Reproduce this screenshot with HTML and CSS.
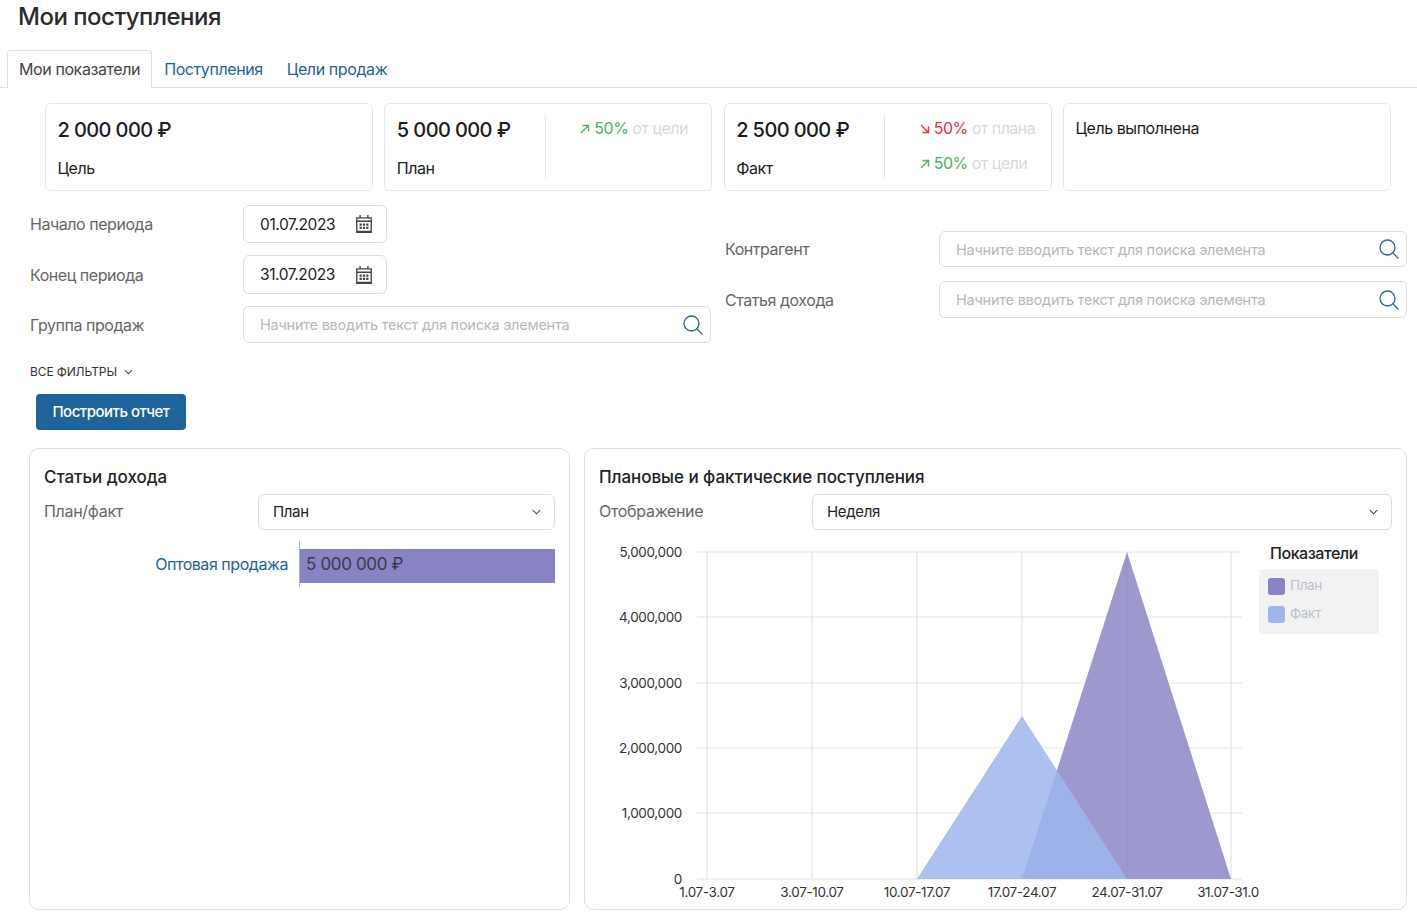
FILE: index.html
```html
<!DOCTYPE html>
<html lang="ru">
<head>
    <meta charset="UTF-8">
    <title>Мои поступления</title>
    <link rel="stylesheet" href="styles.css">
</head>
<body>
    <h1 class="page-title">Мои поступления</h1>

    <div class="tabs">
        <a class="tab active">Мои показатели</a>
        <a class="tab">Поступления</a>
        <a class="tab">Цели продаж</a>
    </div>

    <div class="cards">
        <div class="card">
            <div class="card-main">
                <div class="amount">2 000 000 ₽</div>
                <div class="card-label">Цель</div>
            </div>
        </div>
        <div class="card">
            <div class="card-main split">
                <div class="amount">5 000 000 ₽</div>
                <div class="card-label">План</div>
            </div>
            <div class="card-stats">
                <div class="stat up">
                    <svg class="arrow" viewBox="0 0 10 10"><path d="M1 9 L8.5 1.5 M2.5 1.5 H8.5 V7.5"/></svg>
                    <span class="pct">50%</span> <span class="muted">от цели</span>
                </div>
            </div>
        </div>
        <div class="card">
            <div class="card-main split">
                <div class="amount">2 500 000 ₽</div>
                <div class="card-label">Факт</div>
            </div>
            <div class="card-stats">
                <div class="stat down">
                    <svg class="arrow" viewBox="0 0 10 10"><path d="M1 1 L8.5 8.5 M2.5 8.5 H8.5 V2.5"/></svg>
                    <span class="pct">50%</span> <span class="muted">от плана</span>
                </div>
                <div class="stat up">
                    <svg class="arrow" viewBox="0 0 10 10"><path d="M1 9 L8.5 1.5 M2.5 1.5 H8.5 V7.5"/></svg>
                    <span class="pct">50%</span> <span class="muted">от цели</span>
                </div>
            </div>
        </div>
        <div class="card">
            <div class="card-note">Цель выполнена</div>
        </div>
    </div>

    <div class="filters">
        <div class="filter-col">
            <div class="filter-row">
                <span class="filter-label">Начало периода</span>
                <div class="field date">
                    <span>01.07.2023</span>
                    <svg class="cal" viewBox="0 0 16 18"><path d="M1.5 3.5 H14.5 V16.5 H1.5 Z M1.5 6.5 H14.5 M4.5 1 V4 M11.5 1 V4"/><path class="cal-dots" d="M4 8.5 h2 v2 h-2 z M7 8.5 h2 v2 h-2 z M10 8.5 h2 v2 h-2 z M4 11.5 h2 v2 h-2 z M7 11.5 h2 v2 h-2 z M10 11.5 h2 v2 h-2 z M1.5 15 h13 v1.5 h-13 z"/></svg>
                </div>
            </div>
            <div class="filter-row">
                <span class="filter-label">Конец периода</span>
                <div class="field date tall">
                    <span>31.07.2023</span>
                    <svg class="cal" viewBox="0 0 16 18"><path d="M1.5 3.5 H14.5 V16.5 H1.5 Z M1.5 6.5 H14.5 M4.5 1 V4 M11.5 1 V4"/><path class="cal-dots" d="M4 8.5 h2 v2 h-2 z M7 8.5 h2 v2 h-2 z M10 8.5 h2 v2 h-2 z M4 11.5 h2 v2 h-2 z M7 11.5 h2 v2 h-2 z M10 11.5 h2 v2 h-2 z M1.5 15 h13 v1.5 h-13 z"/></svg>
                </div>
            </div>
            <div class="filter-row">
                <span class="filter-label">Группа продаж</span>
                <div class="field search">
                    <span class="placeholder">Начните вводить текст для поиска элемента</span>
                    <svg class="loupe" viewBox="0 0 22 20"><circle cx="9.5" cy="8.5" r="7.5"/><path d="M15 14 L20.5 19.5"/></svg>
                </div>
            </div>
        </div>
        <div class="filter-col right">
            <div class="filter-row">
                <span class="filter-label">Контрагент</span>
                <div class="field search short">
                    <span class="placeholder">Начните вводить текст для поиска элемента</span>
                    <svg class="loupe" viewBox="0 0 22 20"><circle cx="9.5" cy="8.5" r="7.5"/><path d="M15 14 L20.5 19.5"/></svg>
                </div>
            </div>
            <div class="filter-row">
                <span class="filter-label">Статья дохода</span>
                <div class="field search">
                    <span class="placeholder">Начните вводить текст для поиска элемента</span>
                    <svg class="loupe" viewBox="0 0 22 20"><circle cx="9.5" cy="8.5" r="7.5"/><path d="M15 14 L20.5 19.5"/></svg>
                </div>
            </div>
        </div>
    </div>

    <div class="all-filters">ВСЕ ФИЛЬТРЫ
        <svg class="chev small" viewBox="0 0 10 6"><path d="M1 1 L5 5 L9 1"/></svg>
    </div>
    <button class="btn-primary">Построить отчет</button>

    <div class="panels">
        <section class="panel">
            <h2 class="panel-title">Статьи дохода</h2>
            <div class="panel-row">
                <span class="filter-label">План/факт</span>
                <div class="field select">
                    <span>План</span>
                    <svg class="chev" viewBox="0 0 10 6"><path d="M1 1 L5 5 L9 1"/></svg>
                </div>
            </div>
            <div class="bar-row">
                <a class="bar-name">Оптовая продажа</a>
                <div class="bar-track">
                    <div class="bar" style="width: 100%">5 000 000 ₽</div>
                </div>
            </div>
        </section>

        <section class="panel chart-panel">
            <h2 class="panel-title">Плановые и фактические поступления</h2>
            <div class="panel-row">
                <span class="filter-label">Отображение</span>
                <div class="field select">
                    <span>Неделя</span>
                    <svg class="chev" viewBox="0 0 10 6"><path d="M1 1 L5 5 L9 1"/></svg>
                </div>
            </div>
            <div class="chart-wrap">
                <svg class="chart" viewBox="0 0 662 362">
                    <g class="grid">
                        <path d="M99 10 H644 M99 75 H644 M99 141 H644 M99 206 H644 M99 271 H644 M99 337 H644"/>
                        <path d="M109 10 V337 M214 10 V337 M319 10 V337 M424 10 V337 M529 10 V337 M633 10 V337"/>
                    </g>
                    <polygon class="area-plan" points="424,337 529,10 633,337"/>
                    <polygon class="area-fact" points="319,337 424,174 529,337"/>
                    <g class="y-labels">
                        <text x="84" y="15">5,000,000</text>
                        <text x="84" y="80">4,000,000</text>
                        <text x="84" y="146">3,000,000</text>
                        <text x="84" y="211">2,000,000</text>
                        <text x="84" y="276">1,000,000</text>
                        <text x="84" y="342">0</text>
                    </g>
                    <g class="x-labels">
                        <text x="109" y="355">1.07-3.07</text>
                        <text x="214" y="355">3.07-10.07</text>
                        <text x="319" y="355">10.07-17.07</text>
                        <text x="424" y="355">17.07-24.07</text>
                        <text x="529" y="355">24.07-31.07</text>
                        <text x="630" y="355">31.07-31.0</text>
                    </g>
                </svg>
                <div class="legend">
                    <div class="legend-title">Показатели</div>
                    <div class="legend-box">
                        <div class="legend-item"><span class="swatch plan"></span>План</div>
                        <div class="legend-item"><span class="swatch fact"></span>Факт</div>
                    </div>
                </div>
            </div>
        </section>
    </div>
</body>
</html>
```

FILE: styles.css
```css
body {
    font-family: Inter, "Noto Sans", sans-serif;
    font-size: 16px;
    letter-spacing: -0.45px;
    color: #333;
    background: white;
    margin: 0;
    height: 915px;
    overflow: hidden;
}
.page-title {
    font-size: 24px;
    font-weight: 500;
    line-height: 34px;
    letter-spacing: -0.5px;
    margin: 0;
    padding-left: 18px;
    color: #2b2b2b;
}
.tabs {
    display: flex;
    height: 38px;
    margin-top: 16px;
    padding-left: 7px;
    border-bottom: 1px solid #e0e0e0;
    box-sizing: border-box;
}
.tab {
    padding: 9px 12px 0;
    color: #1e6399;
    line-height: 20px;
    letter-spacing: -0.4px;
}
.tab.active {
    height: 38px;
    box-sizing: border-box;
    color: #444;
    background: white;
    border: 1px solid #e0e0e0;
    border-bottom: none;
    border-radius: 3px 3px 0 0;
    padding: 8px 11px 0;
}
.cards {
    display: flex;
    gap: 11.33px;
    margin: 15px 0 0 45px;
}
.card {
    display: flex;
    width: 328px;
    height: 88px;
    box-sizing: border-box;
    padding: 11px 12px 11px 11.5px;
    border: 1px solid #e8e8e8;
    border-radius: 6px;
}
.card-main {
    width: 148px;
    flex: none;
}
.card-main.split {
    border-right: 1px solid #e8e8e8;
}
.amount {
    font-size: 20px;
    font-weight: 500;
    line-height: 30px;
    letter-spacing: -0.6px;
    color: #1c1c1c;
}
.card-label {
    margin-top: 13px;
    line-height: 20px;
    color: #222;
}
.card-stats {
    padding: 1px 0 0 34.5px;
}
.stat {
    line-height: 24px;
    margin-bottom: 11px;
    letter-spacing: -0.5px;
    white-space: nowrap;
}
.arrow {
    width: 10px;
    height: 10px;
    fill: none;
    stroke-width: 1.4;
}
.stat.up .arrow { stroke: #4caf64; }
.stat.down .arrow { stroke: #e8323c; }
.stat.up .pct { color: #4caf64; }
.stat.down .pct { color: #e8323c; }
.muted {
    color: #d9d9d9;
}
.card-note {
    line-height: 26px;
    color: #1c1c1c;
}
.filters {
    display: flex;
    gap: 14px;
    margin: 14px 10px 0 30px;
}
.filter-col {
    width: 681px;
    flex: none;
    display: flex;
    flex-direction: column;
    gap: 12px;
}
.filter-col.right {
    width: 682px;
    padding-top: 26px;
    gap: 14px;
}
.filter-col.right .filter-label {
    width: 214px;
}
.filter-row {
    display: flex;
    align-items: center;
}
.filter-label {
    width: 213px;
    flex: none;
    color: #666;
}
.field {
    display: flex;
    align-items: center;
    justify-content: space-between;
    box-sizing: border-box;
    border: 1px solid #ddd;
    border-radius: 6px;
    background: white;
    color: #222;
    font-size: 15px;
    letter-spacing: -0.35px;
}
.field.date {
    width: 144px;
    height: 38px;
    padding: 0 13px 0 16px;
    font-size: 15.5px;
    letter-spacing: -0.4px;
}
.field.date.tall {
    height: 39px;
}
.field.search {
    flex: 1;
    height: 37px;
    padding: 0 6px 0 16px;
}
.field.search.short {
    height: 36px;
}
.field.select {
    flex: 1;
    height: 36px;
    padding: 0 13px 2px 14px;
}
.field.select .chev {
    margin-top: 2px;
}
.placeholder {
    font-size: 14.5px;
    letter-spacing: -0.23px;
    color: #b8b8b8;
}
.cal {
    width: 18px;
    height: 20px;
    fill: none;
    stroke: #444;
    stroke-width: 1.2;
}
.cal-dots {
    fill: #444;
    stroke: none;
}
.loupe {
    width: 22px;
    height: 20px;
    fill: none;
    stroke: #2a6a9e;
    stroke-width: 1.3;
}
.chev {
    width: 9px;
    height: 6px;
    fill: none;
    stroke: #444;
    stroke-width: 1.2;
}
.all-filters {
    margin: 21px 0 0 30px;
    font-size: 12px;
    line-height: 16px;
    letter-spacing: -0.1px;
    color: #333;
}
.chev.small {
    margin-left: 4px;
    vertical-align: 1px;
}
.btn-primary {
    display: block;
    width: 150px;
    height: 36px;
    margin: 14px 0 0 36px;
    padding: 0 0 2px;
    border: none;
    border-radius: 4px;
    background: #1e6399;
    color: white;
    font: 500 15px Inter, sans-serif;
    letter-spacing: -0.5px;
}
.panels {
    display: grid;
    grid-template-columns: 541px 823px;
    gap: 14px;
    margin: 18px 0 0 29px;
}
.panel {
    height: 462px;
    box-sizing: border-box;
    padding: 16px 14px;
    border: 1px solid #e0e0e0;
    border-radius: 10px;
}
.panel-title {
    margin: 0;
    font-size: 17px;
    font-weight: 500;
    line-height: 24px;
    letter-spacing: -0.05px;
    color: #222;
}
.panel-row {
    display: flex;
    align-items: center;
    margin-top: 5px;
}
.panel-row .filter-label {
    width: 214px;
    letter-spacing: -0.3px;
    line-height: 20px;
    padding-bottom: 2px;
}
.chart-panel .panel-row .filter-label {
    width: 213px;
}
.bar-row {
    display: flex;
    height: 50px;
    margin-top: 11px;
}
.bar-name {
    width: 255px;
    padding: 13px 11px 0 0;
    box-sizing: border-box;
    text-align: right;
    color: #1e6399;
    line-height: 20px;
}
.bar-track {
    flex: 1;
    height: 46px;
    padding-top: 8px;
    box-sizing: border-box;
    border-left: 1px solid #9db6ec;
}
.bar {
    height: 34px;
    padding-left: 6px;
    box-sizing: border-box;
    background: #8783c4;
    font-size: 17px;
    line-height: 30px;
    letter-spacing: -0.35px;
    color: #3a3a4a;
}
.chart-wrap {
    display: flex;
    margin: 12px 0 0 -1px;
}
.chart {
    width: 662px;
    height: 362px;
    flex: none;
}
.grid path {
    fill: none;
    stroke: #e3e3e3;
    stroke-width: 1.2;
}
.area-plan {
    fill: #8783c4;
    opacity: 0.82;
}
.area-fact {
    fill: #9db6ec;
    opacity: 0.85;
}
.chart text {
    font-size: 13.5px;
    letter-spacing: -0.35px;
    fill: #333;
}
.y-labels text {
    text-anchor: end;
}
.x-labels text {
    text-anchor: middle;
}
.legend {
    margin: 0 0 0 -1px;
}
.legend-title {
    padding-left: 11px;
    font-weight: 500;
    line-height: 22px;
    color: #222;
}
.legend-box {
    width: 120px;
    height: 65px;
    box-sizing: border-box;
    padding: 9px;
    margin-top: 5px;
    background: #f2f2f2;
    border-radius: 3px;
}
.legend-item {
    display: flex;
    gap: 5px;
    height: 17px;
    margin-bottom: 11px;
    font-size: 13.5px;
    line-height: 15px;
    letter-spacing: -0.35px;
    color: #b9bfd0;
}
.swatch {
    width: 17px;
    height: 17px;
    border-radius: 3px;
}
.swatch.plan { background: #8783c4; }
.swatch.fact { background: #9db6ec; }
```
